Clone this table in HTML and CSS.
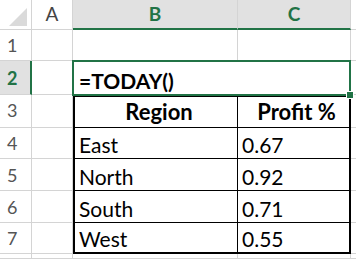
FILE: index.html
```html
<!DOCTYPE html>
<html>
<head>
<meta charset="utf-8">
<link rel="stylesheet" href="styles.css">
</head>
<body>
<div class="sheet">
  <div class="c h corner"><span class="tri"></span></div>
  <div class="c h">A</div>
  <div class="c h hs">B</div>
  <div class="c h hs">C</div>
  <div class="c h edge"></div>

  <div class="c rh">1</div>
  <div class="c"></div>
  <div class="c"></div>
  <div class="c"></div>
  <div class="c edge"></div>

  <div class="c rh rhs">2</div>
  <div class="c"></div>
  <div class="c sel">=TODAY()<span class="handle"></span></div>
  <div class="c edge"></div>

  <div class="c rh mid">3</div>
  <div class="c"></div>
  <div class="c t tb th top">Region</div>
  <div class="c t tc th top">Profit %</div>
  <div class="c edge"></div>

  <div class="c rh">4</div>
  <div class="c"></div>
  <div class="c t tb">East</div>
  <div class="c t tc">0.67</div>
  <div class="c edge"></div>

  <div class="c rh">5</div>
  <div class="c"></div>
  <div class="c t tb">North</div>
  <div class="c t tc">0.92</div>
  <div class="c edge"></div>

  <div class="c rh">6</div>
  <div class="c"></div>
  <div class="c t tb">South</div>
  <div class="c t tc">0.71</div>
  <div class="c edge"></div>

  <div class="c rh">7</div>
  <div class="c"></div>
  <div class="c t tb bot">West</div>
  <div class="c t tc bot">0.55</div>
  <div class="c edge"></div>

  <div class="c rh"></div>
  <div class="c"></div>
  <div class="c"></div>
  <div class="c"></div>
  <div class="c edge"></div>
</div>
</body>
</html>
```
FILE: styles.css
```css
html, body {
  margin: 0;
  padding: 0;
  background: #fff;
}
.sheet {
  display: grid;
  grid-template-columns: 32px 41px 165px 113px 5px;
  grid-template-rows: 30px 31px 34px 33px 31px 32px 32px 31px 5px;
  width: 356px;
  height: 259px;
  overflow: hidden;
  font-family: Lato, "Liberation Sans", sans-serif;
  font-size: 21px;
  color: #000;
}
.c {
  box-sizing: border-box;
  border-right: 1px solid #d4d4d4;
  border-bottom: 1px solid #d4d4d4;
  display: flex;
  align-items: flex-end;
  padding: 0 4px 1px 5px;
  white-space: nowrap;
  overflow: hidden;
  line-height: 1.2;
}
.h {
  justify-content: center;
  align-items: center;
  padding: 0;
  font-size: 19px;
  color: #444;
  background: #fff;
}
.corner {
  position: relative;
}
.tri {
  position: absolute;
  left: 9px;
  top: 8px;
  width: 0;
  height: 0;
  border-left: 18px solid transparent;
  border-bottom: 18px solid #dadada;
}
.hs {
  background: #e1e1e1;
  color: #217346;
  font-weight: bold;
  border-bottom: 2px solid #217346;
}
.rh {
  align-items: center;
  padding: 2px 0 0 7px;
  font-size: 18px;
  color: #555;
}
.rhs {
  background: #e1e1e1;
  color: #217346;
  font-weight: bold;
  border-right: 2px solid #217346;
}
.mid {
  padding-top: 0;
}
.sel {
  grid-column: span 2;
  position: relative;
  overflow: visible;
  margin: -1px 0 -1px -1px;
  border: 2px solid #217346;
  font-weight: bold;
  padding: 0 4px 1px 5px;
  z-index: 2;
}
.handle {
  position: absolute;
  right: -5px;
  bottom: -5px;
  width: 6px;
  height: 6px;
  background: #217346;
  border: 1px solid #fff;
}
.t {
  border-bottom-color: #000;
}
.tb {
  border-left: 2px solid #000;
  border-right-color: #000;
  padding-left: 4px;
}
.tc {
  border-right: 2px solid #000;
  padding-left: 4px;
}
.top {
  border-top: 2px solid #000;
}
.bot {
  border-bottom: 2px solid #000;
}
.th {
  font-weight: bold;
  font-size: 22px;
  justify-content: center;
  align-items: center;
  padding: 0 0 0 6px;
}
.edge {
  border-right: none;
}
```
